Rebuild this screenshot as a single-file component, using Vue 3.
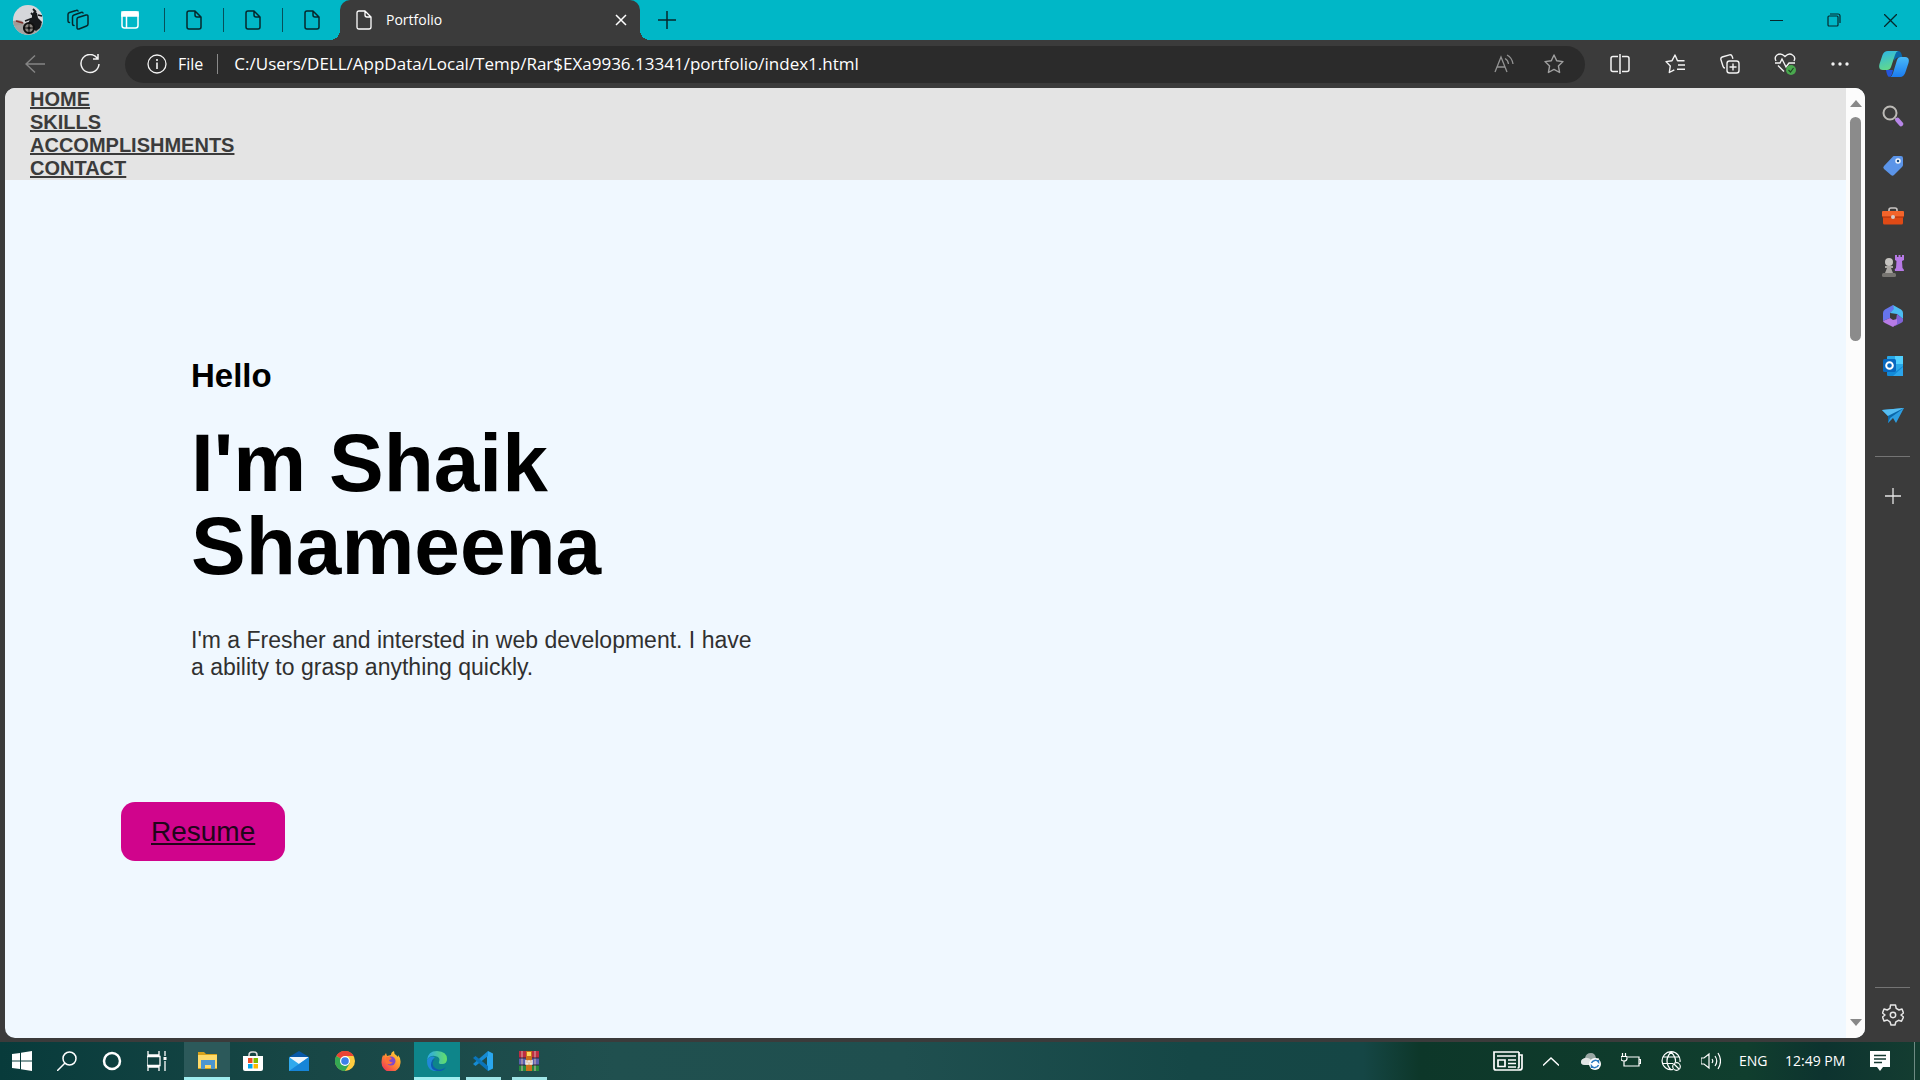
<script setup>
const navLinks = ['HOME', 'SKILLS', 'ACCOMPLISHMENTS', 'CONTACT']
const backgroundTabs = ['Tab 1', 'Tab 2', 'Tab 3']
const url = 'C:/Users/DELL/AppData/Local/Temp/Rar$EXa9936.13341/portfolio/index1.html'
</script>

<template>
  <div class="desktop">
    <header class="tabbar">
      <button class="cell avatar" aria-label="Profile">
        <svg width="30" height="30" viewBox="0 0 30 30">
          <defs><clipPath id="face"><circle cx="15" cy="15" r="15" /></clipPath></defs>
          <g clip-path="url(#face)">
            <rect width="30" height="30" fill="#d5d6da" />
            <path d="M0 19h30v11H0z" fill="#a5a3a2" />
            <path d="M0 16l5-1 4 1 3 3-12 2z" fill="#a39a96" />
            <path d="M3 16l7 2" stroke="#7d2d2a" stroke-width="1.5" />
            <path d="M19 10l2-4 3 2 1 5 4 4-2 6-4 3-4-3-4-4 2-5 2-1z" fill="#17191c" />
            <path d="M18 8l4 4M20 4l3 3M12 16l8-3M25 10l4 1" stroke="#17191c" stroke-width="1.800" />
            <circle cx="16" cy="23" r="5" fill="#8a8580" stroke="#111" stroke-width="2.200" />
            <circle cx="16" cy="23" r="1.500" fill="#111" />
            <path d="M16 18v10M11 23h10" stroke="#111" />
          </g>
        </svg>
      </button>
      <button class="cell spaces" aria-label="Workspaces">
        <svg width="22" height="22" viewBox="0 0 22 22" fill="none" stroke="#06282c" stroke-width="1.5" stroke-linejoin="round" stroke-linecap="round">
          <path d="M11 8.500l8-2.500q2-.5 2 1.500v7.500q0 1.500-1.500 2L12 20q-2 .5-2-1.500v-8.500q0-1 1-1.500z" />
          <path d="M16 4q-.5-1-2-.5L7 6q-1.500.5-1.500 2v7q0 1.500 1.500 1.500" />
          <path d="M11 2q-.5-1-2-.5L2.500 3.500Q1 4 1 5.500V12q0 1.500 1.500 1.500" />
        </svg>
      </button>
      <button class="cell vtabs" aria-label="Tab actions">
        <svg width="18" height="18" viewBox="0 0 18 18" fill="none" stroke="#fff" stroke-width="1.500">
          <rect x="1" y="1" width="16" height="16" rx="2.500" /><path d="M5.500 5v12" /><path d="M1 1h16v4H1z" fill="#fff" />
        </svg>
      </button>
      <button v-for="tab in backgroundTabs" :key="tab" class="cell idle-tab" :aria-label="tab">
        <svg width="16" height="20" viewBox="0 0 16 20" fill="none" stroke="#06282c" stroke-width="1.500" stroke-linejoin="round">
          <path d="M3 1h6l6 6v10q0 2-2 2H3q-2 0-2-2V3q0-2 2-2zM9 1v4q0 2 2 2h4" />
        </svg>
      </button>
      <div class="active-tab">
        <svg width="16" height="20" viewBox="0 0 16 20" fill="none" stroke="#fff" stroke-width="1.300" stroke-linejoin="round">
          <path d="M3 1h6l6 6v10q0 2-2 2H3q-2 0-2-2V3q0-2 2-2zM9 1v4q0 2 2 2h4" />
        </svg>
        <span class="tab-title">Portfolio</span>
        <button class="tab-close" aria-label="Close tab">
          <svg width="12" height="12" viewBox="0 0 12 12" stroke="#fff" stroke-width="1.500"><path d="M1 1l10 10M11 1L1 11" /></svg>
        </button>
      </div>
      <button class="cell new-tab" aria-label="New tab">
        <svg width="18" height="18" viewBox="0 0 18 18" stroke="#06282c" stroke-width="1.500"><path d="M9 0v18M0 9h18" /></svg>
      </button>
      <div class="window-controls">
        <button class="cell win" aria-label="Minimize"><svg width="13" height="13" viewBox="0 0 13 13" stroke="#06282c"><path d="M0 6.500h13" /></svg></button>
        <button class="cell win" aria-label="Restore">
          <svg width="14" height="14" viewBox="0 0 14 14" fill="none" stroke="#06282c" stroke-width="1.200"><rect x="1" y="3" width="10" height="10" rx="1" /><path d="M3 1h8q2 0 2 2v7" /></svg>
        </button>
        <button class="cell win" aria-label="Close"><svg width="13" height="13" viewBox="0 0 13 13" stroke="#06282c" stroke-width="1.300"><path d="M0 0l13 13M13 0L0 13" /></svg></button>
      </div>
    </header>

    <div class="toolbar">
      <button class="cell nav-btn" aria-label="Back">
        <svg width="20" height="18" viewBox="0 0 20 18" fill="none" stroke="#858585" stroke-width="1.400"><path d="M20 9H1M10 .5L1 9l9 8.500" /></svg>
      </button>
      <button class="cell nav-btn" aria-label="Refresh">
        <svg width="20" height="20" viewBox="0 0 20 20" fill="none" stroke="#f3f3f3" stroke-width="1.500"><path d="M17.500 4.500A9 9 0 1 0 19 10M18 0v5h-5" /></svg>
      </button>
      <div class="address">
        <svg width="20" height="20" viewBox="0 0 20 20" fill="none" stroke="#f3f3f3" stroke-width="1.300"><circle cx="10" cy="10" r="9" /><path d="M10 8.500V15M10 5v2" stroke-width="1.600" /></svg>
        <label class="scheme" for="url">File</label>
        <span class="bar"></span>
        <input id="url" class="url" type="text" :value="url" />
        <button class="cell addr-btn" aria-label="Read aloud">
          <svg width="20" height="20" viewBox="0 0 20 20" fill="none" stroke="#939393" stroke-width="1.300"><path d="M1 18L7 3l6 15M3 13h8M11 4.500q3 1.500 3.500 5.500M13 1q5 2.500 6 9" /></svg>
        </button>
        <button class="cell addr-btn" aria-label="Favorite this page">
          <svg width="20" height="20" viewBox="0 0 20 20" fill="none" stroke="#a0a0a0" stroke-width="1.400" stroke-linejoin="round"><path d="M10 1l2.700 5.700 6.300.9-4.600 4.300 1.200 6.600L10 15.400l-5.600 3.100 1.200-6.600L1 7.600l6.300-.9z" /></svg>
        </button>
      </div>
      <div class="tools">
        <button class="cell tool" aria-label="Split screen">
          <svg width="20" height="20" viewBox="0 0 20 20" fill="none" stroke="#f3f3f3" stroke-width="1.500"><path d="M10 0v20M8 2.500H3Q1 2.500 1 4.500v11q0 2 2 2h5M12 2.500h5q2 0 2 2v11q0 2-2 2h-5" /></svg>
        </button>
        <button class="cell tool" aria-label="Favorites">
          <svg width="20" height="20" viewBox="0 0 20 20" fill="none" stroke="#f3f3f3" stroke-width="1.400" stroke-linejoin="round"><path d="M19.500 6.800h-7L10 1 7 6.700l-6 .9 4.300 4.300-1 6.600 5-2.700M13 11h7M12 15.300h8" /></svg>
        </button>
        <button class="cell tool" aria-label="Collections">
          <svg width="20" height="20" viewBox="0 0 20 20" fill="none" stroke="#f3f3f3" stroke-width="1.400"><rect x="7" y="7" width="12" height="12" rx="2.500" /><path d="M13 9.500v7M9.500 13h7M5 14q-1.500 0-2-1.800L.9 5.600Q.5 3.700 2.200 3L9.500.9q2-.5 2.700 1.500l.7 2.400" /></svg>
        </button>
        <button class="cell tool" aria-label="Browser essentials">
          <svg width="22" height="22" viewBox="0 0 22 22" fill="none" stroke="#f3f3f3" stroke-width="1.400"><path d="M2 8q-2-4 1-6 4-2.500 8 1.500Q15 -.5 18.500 2q3.500 2 1.500 6M1 10h5l2-4 4 8 3-4h6M4 12.500l6 6" /><circle cx="17" cy="17" r="5" fill="#4aa84f" stroke="none" /><path d="M14.500 17l2 2 3-4" stroke="#1f4722" stroke-width="1.200" /></svg>
        </button>
        <button class="cell tool" aria-label="Settings and more">
          <svg width="18" height="4" viewBox="0 0 18 4" fill="#f3f3f3"><circle cx="2" cy="2" r="1.700" /><circle cx="9" cy="2" r="1.700" /><circle cx="16" cy="2" r="1.700" /></svg>
        </button>
        <button class="cell copilot" aria-label="Copilot">
          <svg width="30" height="28" viewBox="0 0 30 28">
            <defs>
              <linearGradient id="cpa" x1="0" y1="0" x2="0.300" y2="1"><stop offset="0" stop-color="#2bb5e8" /><stop offset="1" stop-color="#61d88e" /></linearGradient>
              <linearGradient id="cpb" x1="0" y1="0" x2="0" y2="1"><stop offset="0" stop-color="#49b9f7" /><stop offset="1" stop-color="#1b7cf0" /></linearGradient>
            </defs>
            <path d="M14 1h5q2.500 0 3.500 3l1 3.500h-4q-3 0-4 3.500z" fill="#0a66a9" />
            <path d="M7 20h7l-1 4q-1 3-3 3-2-1-3-7z" fill="#2455dc" />
            <path d="M9 1h10q-2 .5-3 4l-4 12q-1 3-4 3H4q-5 0-3.500-6l3-9Q5 1 9 1z" fill="url(#cpa)" />
            <path d="M22 7h4q5 0 3.500 6l-3 9q-1.500 5-5.500 5H11q2-.5 3-4l4-13q1-3 4-3z" fill="url(#cpb)" />
          </svg>
        </button>
      </div>
    </div>

    <div class="middle">
      <main class="page">
        <div class="document">
          <nav class="menu">
            <a v-for="link in navLinks" :key="link" href="#">{{ link }}</a>
          </nav>
          <section class="hero">
            <div class="intro">
              <h2>Hello</h2>
              <h1>I'm Shaik Shameena</h1>
              <p>I'm a Fresher and intersted in web development. I have a ability to grasp anything quickly.</p>
            </div>
            <a class="resume" href="#">Resume</a>
          </section>
        </div>
        <div class="scrollbar">
          <span class="arrow up"></span>
          <div class="track"><div class="thumb"></div></div>
          <span class="arrow down"></span>
        </div>
      </main>

      <aside class="sidebar">
        <button class="side" aria-label="Search">
          <svg width="22" height="22" viewBox="0 0 22 22" fill="none"><circle cx="8" cy="8" r="6.500" stroke="#bcbab6" stroke-width="2" /><path d="M13 13l3 3" stroke="#999" stroke-width="2" /><path d="M15.500 15l3.500 4" stroke="#b786e8" stroke-width="4.500" stroke-linecap="round" /></svg>
        </button>
        <button class="side" aria-label="Shopping">
          <svg width="22" height="22" viewBox="0 0 22 22"><path d="M12 1h7q2 0 2 2v7q0 1-1 2l-8 8q-1.500 1.500-3 0L2 14q-1.500-1.500 0-3l8.500-9q.5-1 1.500-1z" fill="#5b94e8" /><circle cx="16" cy="6" r="2" fill="#164d83" stroke="#f0f3fa" stroke-width="1.500" /></svg>
        </button>
        <button class="side" aria-label="Tools">
          <svg width="22" height="18" viewBox="0 0 22 18"><path d="M7 5V3q0-2 2-2h4q2 0 2 2v2" fill="none" stroke="#c9c5c3" stroke-width="1.600" /><path d="M1 8h20v8q0 1.500-1.500 1.500h-17Q1 17.500 1 16z" fill="#df4a16" /><rect y="4" width="22" height="6" rx="1" fill="#f3642b" /><path d="M0 10h22" stroke="#a92e0b" /><circle cx="11" cy="10" r="2" fill="#d6cdca" /></svg>
        </button>
        <button class="side" aria-label="Games">
          <svg width="22" height="22" viewBox="0 0 22 22"><path d="M13 0h2v2h1.500V0h2v2H20V0h2v5l-2 1 .5 7q1.500 1 1.500 3h-9q-1-2 1-3l.5-7-1.500-1z" fill="#b77ae6" /><circle cx="7" cy="7" r="4" fill="#c5c3c0" /><path d="M3 11h8v2H9l2 5H3l2-5H3z" fill="#aaa7a3" /><rect y="18" width="14" height="4" rx="1.500" fill="#777571" /></svg>
        </button>
        <button class="side" aria-label="Microsoft 365">
          <svg width="22" height="22" viewBox="0 0 22 22"><path d="M11 0L3 4.500Q1 5.500 1 8v8l7-3V8l5-4z" fill="#6675ec" /><path d="M11 0l8 4.500q2 1 2 3.500v6l-6-5-7-1 4-4z" fill="#4cbdf2" /><path d="M15 9l6 5v2q0 1-2 2l-6 3z" fill="#8063d8" /><path d="M1 16l7-3 3 2 4-1v5l-4 3-8-4q-2-1-2-2z" fill="#b77be6" /></svg>
        </button>
        <button class="side" aria-label="Outlook">
          <svg width="20" height="20" viewBox="0 0 20 20"><rect x="4" width="16" height="16" rx="1" fill="#28a8e8" /><path d="M12 0h8v8h-8z" fill="#50d0ff" /><path d="M4 11l8 5 8-6v9q0 1-1 1H5q-1 0-1-1z" fill="#128ad8" /><path d="M10 20l10-9v9z" fill="#2ba5ec" /><rect y="3" width="13" height="13" rx="1.500" fill="#0868bf" /><circle cx="6.500" cy="9.500" r="3.300" fill="none" stroke="#fff" stroke-width="2" /></svg>
        </button>
        <button class="side" aria-label="Drop">
          <svg width="22" height="18" viewBox="0 0 22 18"><path d="M0 3l22-2-8 15-3-5-5 5V9z" fill="#2d9ee1" /><path d="M0 3l22-2L6 9z" fill="#55bdf2" /><path d="M6 9L22 1 8 11l-2 5z" fill="#0b67a8" /></svg>
        </button>
        <hr />
        <button class="side" aria-label="Customize">
          <svg width="16" height="16" viewBox="0 0 16 16" stroke="#e6e6e6" stroke-width="1.300"><path d="M8 0v16M0 8h16" /></svg>
        </button>
        <hr class="lower" />
        <button class="side gear" aria-label="Settings">
          <svg width="22" height="22" viewBox="0 0 22 22" fill="none" stroke="#e6e6e6" stroke-width="1.500" stroke-linejoin="round"><circle cx="11" cy="11" r="2.700" /><path d="M8.500 1h5l.7 3.300L17 6l3-1 1.500 4-2.500 2 2.500 2-2 4.300-3-1-2.600 1.500-.9 3.200H9l-1-3.200L5.300 16 2 17 .5 13 3 11 .5 9 2 5l3.200 1L8 4.300z" /></svg>
        </button>
      </aside>
    </div>

    <footer class="taskbar">
      <button class="task start" aria-label="Start"><svg width="20" height="20" viewBox="0 0 20 20" fill="#fff"><path d="M0 3l8-1v7.500H0zM9 1.800L20 0v9.500H9zM0 10.500h8V18l-8-1zM9 10.500h11V20L9 18.200z" /></svg></button>
      <button class="task system" aria-label="Search"><svg width="20" height="20" viewBox="0 0 20 20" fill="none" stroke="#fff" stroke-width="1.500"><circle cx="12.500" cy="7.500" r="6.500" /><path d="M8 12l-8 8" /></svg></button>
      <button class="task system" aria-label="Cortana"><svg width="20" height="20" viewBox="0 0 20 20" fill="none" stroke="#fff" stroke-width="2.500"><circle cx="10" cy="10" r="8" /></svg></button>
      <button class="task system" aria-label="Task view"><svg width="20" height="20" viewBox="0 0 20 20" fill="none" stroke="#fff" stroke-width="1.300"><path d="M1 0v4h11V0M1 20v-4h11v4M0 5.500h13v9H0zM18 0v5M18 10v10" /><path d="M16.500 6h3v3h-3z" fill="#fff" stroke="none" /></svg></button>
      <button class="task open" aria-label="File Explorer"><svg width="20" height="18" viewBox="0 0 20 18"><path d="M1 0h6l2 2h11v15H1z" fill="#d9a21b" /><path d="M1 3h19v13H1z" fill="#ffda6a" /><path d="M4 8h14v9h-4v-4H8v4H4z" fill="#4c95d1" /></svg></button>
      <button class="task" aria-label="Microsoft Store"><svg width="20" height="20" viewBox="0 0 20 20"><path d="M6 6V4q0-3 3-3h2q3 0 3 3v2" fill="none" stroke="#ddd" stroke-width="1.500" /><path d="M0 5h20v13q0 2-2 2H2q-2 0-2-2z" fill="#fff" /><path d="M5 7h4.500v5H5z" fill="#ed4b27" /><path d="M10.500 7H15v5h-4.500z" fill="#7fba00" /><path d="M5 13h4.500v4.500H5z" fill="#00a4ef" /><path d="M10.500 13H15v4.500h-4.500z" fill="#ffb900" /></svg></button>
      <button class="task" aria-label="Mail"><svg width="20" height="20" viewBox="0 0 20 20"><path d="M0 6l10-6 10 6v4H0z" fill="#0758a7" /><path d="M1 6h18v8H1z" fill="#eef5fb" /><path d="M0 6l10 7 10-7v14H0z" fill="#30a9ed" /><path d="M0 20L20 6v14z" fill="#1685d8" /></svg></button>
      <button class="task" aria-label="Chrome"><svg width="20" height="20" viewBox="0 0 20 20"><circle cx="10" cy="10" r="10" fill="#ffcd40" /><path d="M10 10L1.300 5A10 10 0 0 1 18.700 5H10z" fill="#e94335" /><path d="M10 10L1.300 5A10 10 0 0 0 10 20l5-8z" fill="#34a853" /><circle cx="10" cy="10" r="5" fill="#fff" /><circle cx="10" cy="10" r="3.800" fill="#3b7fe8" /></svg></button>
      <button class="task" aria-label="Firefox">
        <svg width="20" height="20" viewBox="0 0 20 20"><defs><linearGradient id="fx" x1="1" y1="0" x2="0.200" y2="1"><stop offset="0" stop-color="#ffe23b" /><stop offset="0.500" stop-color="#ff9130" /><stop offset="1" stop-color="#ef3257" /></linearGradient></defs><path d="M2 4l1 1 2-3 1 3 4-1q0-3 3-4 0 3 2 4l2 2 0-2q3 3 2.500 8A9.500 9.500 0 0 1 .5 11Q.5 7 2 4z" fill="url(#fx)" /><circle cx="10" cy="10" r="4.500" fill="#8149c9" /><path d="M5 6l4 0 2 2-3 1q1 3 4 2-3 4-7 1z" fill="#ff7139" /></svg>
      </button>
      <button class="task current" aria-label="Edge">
        <svg width="20" height="20" viewBox="0 0 20 20"><defs><linearGradient id="eg"><stop offset="0" stop-color="#2aa7ea" /><stop offset="1" stop-color="#63df68" /></linearGradient></defs><path d="M0 9Q1 0 10 0q10 .5 10 8 0 5-5 5-4 0-3-2 2-5-4-6Q3 4 0 9z" fill="url(#eg)" /><path d="M0 9q3-5 8-3-4 3-3 7 2 6 8 6.500Q3 22 .5 14 0 12 0 9z" fill="#2188d8" /><path d="M8 8q-5 4 0 9 5 4 11-1-3 5-9 4-6-1-6-6 0-5 4-6z" fill="#0f5bb0" /></svg>
      </button>
      <button class="task running" aria-label="Visual Studio Code"><svg width="20" height="20" viewBox="0 0 20 20"><path d="M15 0l5 2.500v15L15 20l-1-5V5z" fill="#2aa7ee" /><path d="M15 0v5L2.500 15 0 13z" fill="#168bd2" /><path d="M15 20v-5L2.500 5 0 7z" fill="#0a75bb" /></svg></button>
      <button class="task running" aria-label="WinRAR"><svg width="20" height="20" viewBox="0 0 20 20"><path d="M0 0h20v7H0z" fill="#bd2d43" /><path d="M0 7h20v7H0z" fill="#5960ae" /><path d="M0 14h20v6H0z" fill="#248a3c" /><path d="M3 0v20M16 0v20" stroke="#dab3ad" /><path d="M0 7h20M0 14h20" stroke="#2c233a" /><path d="M7 0h6v20H7z" fill="#c9711c" /><path d="M8 1h4v4H8z" fill="#ffd65c" /><path d="M7 9v4h2v-3h2v3h2V9" fill="none" stroke="#eee" stroke-width="1.500" /></svg></button>

      <div class="tray">
        <button class="news" aria-label="News"><svg width="30" height="20" viewBox="0 0 30 20" fill="none" stroke="#fff" stroke-width="1.700"><path d="M26 1H1v16q0 2 2 2h23q3 0 3-2V4h-3M26 1v15q0 1-1.500 1M4 5h19M15 9h8M15 12.500h8M15 16h8" /><path d="M5 9h7v6.500H5z" /></svg></button>
        <button class="tray-btn" aria-label="Show hidden icons"><svg width="16" height="9" viewBox="0 0 16 9" fill="none" stroke="#fff" stroke-width="1.400"><path d="M0 8.500L8 1l8 7.500" /></svg></button>
        <button class="tray-btn" aria-label="OneDrive"><svg width="20" height="18" viewBox="0 0 20 18"><path d="M4 13q-4 0-4-3t4-4q1-5 6-5 4 0 5 5h3v7z" fill="#9aa7a4" /><path d="M4 13q-4 0-4-3t4-4q4-1 7 3v4z" fill="#e2e6e5" /><circle cx="14" cy="12" r="6" fill="#fff" /><path d="M10.500 11a4 4 0 0 1 7-1V8M17.500 13a4 4 0 0 1-7 1v2" fill="none" stroke="#2a7ac0" stroke-width="1.500" /></svg></button>
        <button class="tray-btn" aria-label="Battery"><svg width="20" height="16" viewBox="0 0 20 16" fill="none" stroke="#fff" stroke-width="1.200"><path d="M7 4h11v9H5M18 6.500h1.500v4H18M1.500 0v3M4.500 0v3M0 3.500h6v2Q6 8 3 8T0 5.500zM3 8v5h2" /></svg></button>
        <button class="tray-btn" aria-label="Network"><svg width="20" height="20" viewBox="0 0 20 20" fill="none" stroke="#fff" stroke-width="1.200"><path d="M12 18.500A9 9 0 1 1 19 11M10 1Q2 10 10 19M10 1q5 5 4.500 10M2 6h16M1 12.500h11" /><circle cx="15.500" cy="15.500" r="3.800" /><path d="M13 13l5 5" /></svg></button>
        <button class="tray-btn" aria-label="Volume"><svg width="20" height="18" viewBox="0 0 20 18" fill="none" stroke="#fff" stroke-width="1.200"><path d="M0 6h3l5-4v14l-5-4H0zM11 7q1.500 2 0 4M14 4q3.500 5 0 10M17 1q5 8 0 16" /></svg></button>
        <span class="lang">ENG</span>
        <time class="clock">12:49 PM</time>
        <button class="notes" aria-label="Notifications"><svg width="20" height="20" viewBox="0 0 20 20"><path d="M0 0h20v16h-7l-3 4-3-4H0z" fill="#fff" /><path d="M4 4.500h12M4 8h12M4 11.500h8" stroke="#153a32" stroke-width="1.300" /></svg></button>
      </div>
    </footer>
  </div>
</template>

<style>
body {
  margin: 0;
  background: #3b3b3b;
}
</style>

<style scoped>
.desktop {
  display: flex;
  flex-direction: column;
  min-height: 100vh;
  background: #3b3b3b;
  color: #fff;
  font-family: "Open Sans", "Noto Sans", sans-serif;
}

button {
  display: flex;
  align-items: center;
  justify-content: center;
  flex: none;
  padding: 0;
  border: 0;
  background: none;
}

svg {
  display: block;
  flex: none;
}

/* Tab strip */
.tabbar {
  display: flex;
  height: 40px;
  background: #00b7c7;
}

.avatar {
  width: 56px;
}

.spaces {
  width: 44px;
}

.vtabs {
  width: 60px;
  margin-right: 4px;
}

.idle-tab {
  position: relative;
  width: 59px;
}

.idle-tab::before {
  content: "";
  position: absolute;
  left: 0;
  top: 8px;
  width: 1px;
  height: 24px;
  background: #06505a;
}

.active-tab {
  position: relative;
  display: flex;
  align-items: center;
  box-sizing: border-box;
  width: 300px;
  margin-left: -1px;
  padding: 0 13px 0 16px;
  border-radius: 10px 10px 0 0;
  background: #3b3b3b;
}

.active-tab::before,
.active-tab::after {
  content: "";
  position: absolute;
  bottom: 0;
  width: 10px;
  height: 10px;
}

.active-tab::before {
  right: 100%;
  background: radial-gradient(circle at 0 0, #00b7c7 10px, #3b3b3b 10px);
}

.active-tab::after {
  left: 100%;
  background: radial-gradient(circle at 100% 0, #00b7c7 10px, #3b3b3b 10px);
}

.tab-title {
  flex: 1;
  margin-left: 14px;
  font-size: 14px;
  line-height: 20px;
}

.new-tab {
  width: 54px;
}

.window-controls {
  display: flex;
  margin: 0 1px 0 auto;
}

.win {
  width: 57px;
}

/* Address row */
.toolbar {
  display: flex;
  align-items: center;
  height: 48px;
  padding-left: 7px;
}

.nav-btn {
  width: 55px;
  height: 40px;
}

.address {
  display: flex;
  align-items: center;
  flex: 1;
  min-width: 0;
  height: 37px;
  margin: 0 7px 0 8px;
  padding: 0 6px 0 22px;
  box-sizing: border-box;
  border-radius: 19px;
  background: #2b2b2b;
}

.scheme {
  margin-left: 11px;
  font-size: 16px;
}

.bar {
  width: 1px;
  height: 20px;
  margin: 0 16px 0 14px;
  background: #8a8a8a;
}

.url {
  flex: 1;
  min-width: 0;
  padding: 0;
  border: 0;
  outline: 0;
  background: none;
  color: #fff;
  font-family: inherit;
  font-size: 17px;
  line-height: 24px;
}

.addr-btn {
  width: 50px;
}

.tools {
  display: flex;
  align-items: center;
}

.tool {
  width: 55px;
}

.copilot {
  width: 53px;
}

/* Page and sidebar */
.middle {
  display: flex;
  flex: 1;
  margin-bottom: 4px;
}

.page {
  display: flex;
  flex: 1;
  min-width: 0;
  margin-left: 5px;
  overflow: hidden;
  border-radius: 10px;
  background: #f0f8ff;
  font-family: "Liberation Sans", Arial, sans-serif;
}

.document {
  flex: 1;
  min-width: 0;
}

.menu {
  display: flex;
  flex-direction: column;
  align-items: flex-start;
  padding-left: 25px;
  background: #e4e4e4;
}

.menu a {
  color: #3b3b3b;
  font-size: 20px;
  font-weight: 700;
  line-height: 23px;
}

.hero {
  padding: 177px 0 0 116px;
}

.intro {
  max-width: 570px;
  margin-left: 70px;
}

h2 {
  margin: 0 0 27px;
  color: #000;
  font-size: 33px;
  line-height: 37px;
}

h1 {
  margin: 0 0 40px;
  color: #000;
  font-size: 82px;
  line-height: 83px;
}

.intro p {
  margin: 0;
  color: #303030;
  font-size: 23px;
  line-height: 27px;
}

.resume {
  display: inline-block;
  margin-top: 121px;
  padding: 14px 30px;
  border-radius: 14px;
  background: #d0048c;
  color: #21051a;
  font-size: 28px;
  line-height: 31px;
}

.scrollbar {
  display: flex;
  flex-direction: column;
  align-items: center;
  width: 19px;
  padding: 12px 0;
  box-sizing: border-box;
  background: #fcfcfc;
}

.arrow {
  border: 6px solid transparent;
  border-top-width: 0;
  border-bottom: 7px solid #888;
}

.arrow.down {
  transform: rotate(180deg);
}

.track {
  flex: 1;
  padding-top: 10px;
}

.thumb {
  width: 11px;
  height: 224px;
  border-radius: 6px;
  background: #8b8b8b;
}

.sidebar {
  display: flex;
  flex-direction: column;
  align-items: center;
  width: 55px;
  padding-top: 3px;
  box-sizing: border-box;
}

.side {
  width: 50px;
  height: 50px;
}

hr {
  width: 35px;
  height: 1px;
  margin: 15px 0 14px;
  border: 0;
  background: #747474;
}

hr.lower {
  margin: auto 0 7px;
}

.gear {
  height: 40px;
  margin-bottom: 3px;
}

/* Taskbar */
.taskbar {
  display: flex;
  height: 38px;
  background: linear-gradient(90deg, #083b3b 0%, #174645 15%, #20504f 32%, #1f4f4f 47%, #154746 62%, #154645 71%, #0d3729 74%, #103e2e 91%, #0d332f 95%, #143d31 100%);
}

.task {
  width: 46px;
}

.task.start {
  width: 44px;
}

.task.system {
  width: 45px;
}

.open {
  margin-left: 5px;
  background: #2c595a;
}

.current {
  background: #0e858a;
}

.open,
.current {
  box-shadow: inset 0 -3px #a0eef0;
}

.running {
  background: linear-gradient(#a0e6e8, #a0e6e8) center bottom / 35px 3px no-repeat;
}

.tray {
  display: flex;
  align-items: center;
  margin: 0 5px 0 auto;
  border-right: 1px solid #6e8a83;
}

.news {
  width: 46px;
}

.tray-btn {
  width: 40px;
}

.lang,
.clock {
  font-size: 14px;
  line-height: 20px;
  white-space: nowrap;
}

.lang {
  width: 46px;
  margin-left: 8px;
}

.clock {
  width: 61px;
}

.notes {
  width: 68px;
}
</style>
